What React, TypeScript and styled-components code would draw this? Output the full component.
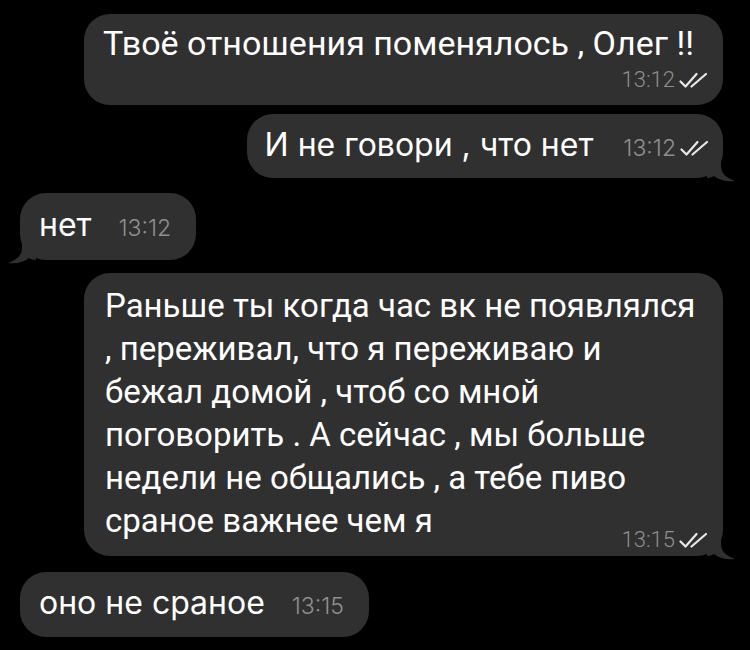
import React from "react";
import styled, { createGlobalStyle } from "styled-components";

type Face = "roboto" | "sf";

const fontStack = (face: Face) =>
  face === "roboto"
    ? `Roboto, "Noto Sans", sans-serif`
    : `Inter, "Open Sans", sans-serif`;

const GlobalStyle = createGlobalStyle`
  html, body {
    margin: 0;
    padding: 0;
    background: #000000;
  }
  #root {
    min-height: 650px;
    background: #000000;
  }
`;

export default function App() {
  return (
    <>
      <GlobalStyle />
      <Chat>
        <Row $out>
          <Bubble $pad="8px 15px 13px 19px" $width={639}>
            <Line $face="roboto" $size={34}>
              Твоё отношения поменялось , Олег !!
            </Line>
            <MetaRow>
              <Meta time="13:12" face="roboto" read />
            </MetaRow>
          </Bubble>
        </Row>

        <Row $out $gap={9}>
          <Bubble $pad="11px 14px 13px 18px">
            <InlineRow $gap={30}>
              <Line $face="sf" $size={32}>И не говори , что нет</Line>
              <Meta time="13:12" face="sf" read />
            </InlineRow>
            <Tail side="right" />
          </Bubble>
        </Row>

        <Row $gap={15}>
          <Bubble $pad="12px 25px 15px 19px">
            <InlineRow $gap={27}>
              <Line $face="sf" $size={32}>нет</Line>
              <Meta time="13:12" face="sf" />
            </InlineRow>
            <Tail side="left" />
          </Bubble>
        </Row>

        <Row $out $gap={13}>
          <Bubble $pad="11px 15px 14px 21px" $width={639}>
            <Line $face="roboto" $size={33}>Раньше ты когда час вк не появлялся</Line>
            <Line $face="roboto" $size={33}>, переживал, что я переживаю и</Line>
            <Line $face="roboto" $size={33}>бежал домой , чтоб со мной</Line>
            <Line $face="roboto" $size={33}>поговорить . А сейчас , мы больше</Line>
            <Line $face="roboto" $size={33}>недели не общались , а тебе пиво</Line>
            <LastRow>
              <Line $face="roboto" $size={33}>сраное важнее чем я</Line>
              <MetaSink>
                <Meta time="13:15" face="roboto" read />
              </MetaSink>
            </LastRow>
            <Tail side="right" />
          </Bubble>
        </Row>

        <Row $gap={16}>
          <Bubble $pad="11px 25px 14px 19px">
            <InlineRow $gap={27}>
              <Line $face="sf" $size={32}>оно не сраное</Line>
              <Meta time="13:15" face="sf" />
            </InlineRow>
          </Bubble>
        </Row>
      </Chat>
    </>
  );
}

interface MetaProps {
  time: string;
  face: Face;
  read?: boolean;
}
function Meta({ time, face, read }: MetaProps) {
  return (
    <MetaBox>
      <Time $face={face}>{time}</Time>
      {read && (
        <Checks width="29" height="17" viewBox="0 0 29 17">
          <polyline points="1.5,9.5 6.5,14.5 17.5,2" />
          <line x1="12.5" y1="14.5" x2="27" y2="2" />
        </Checks>
      )}
    </MetaBox>
  );
}

function Tail({ side }: { side: "left" | "right" }) {
  return (
    <TailSvg $side={side} width="30" height="26" viewBox="0 0 30 26">
      <path d="M14 0 L14 10 C14 18 20 22 28 25 C19 26 12 24 7 20 C5 21 3 22 0 22 L0 0 Z" />
    </TailSvg>
  );
}

const Chat = styled.div`
  display: flex;
  flex-direction: column;
  padding: 14px 27px 0 20px;
`;

const Row = styled.div<{ $out?: boolean; $gap?: number }>`
  display: flex;
  justify-content: ${(p) => (p.$out ? "flex-end" : "flex-start")};
  margin-top: ${(p) => p.$gap ?? 0}px;
`;

const Bubble = styled.div<{ $pad: string; $width?: number }>`
  position: relative;
  box-sizing: border-box;
  ${(p) => (p.$width ? `width: ${p.$width}px;` : "")}
  padding: ${(p) => p.$pad};
  background: #303030;
  border-radius: 26px;
  color: #ffffff;
`;

const Line = styled.div<{ $face: Face; $size: number }>`
  position: relative;
  z-index: 1;
  font-family: ${(p) => fontStack(p.$face)};
  font-size: ${(p) => p.$size}px;
  line-height: ${(p) => (p.$face === "roboto" ? 43 : 40)}px;
  white-space: nowrap;
`;

const InlineRow = styled.div<{ $gap: number }>`
  position: relative;
  z-index: 1;
  display: flex;
  align-items: baseline;
  gap: ${(p) => p.$gap}px;
`;

const LastRow = styled.div`
  position: relative;
  z-index: 1;
  display: flex;
  justify-content: space-between;
  align-items: flex-end;
`;

const MetaSink = styled.div`
  margin-bottom: -10px;
`;

const MetaRow = styled.div`
  display: flex;
  justify-content: flex-end;
  margin-top: 3px;
`;

const MetaBox = styled.div`
  display: flex;
  align-items: center;
  gap: 4px;
`;

const Time = styled.span<{ $face: Face }>`
  font-family: ${(p) => fontStack(p.$face)};
  font-size: ${(p) => (p.$face === "roboto" ? 22 : 23)}px;
  font-weight: 300;
  color: #8f8f8f;
  line-height: 24px;
`;

const Checks = styled.svg`
  fill: none;
  stroke: #e8e8e8;
  stroke-width: 2.2;
  stroke-linecap: round;
  stroke-linejoin: round;
`;

const TailSvg = styled.svg<{ $side: "left" | "right" }>`
  position: absolute;
  bottom: -4px;
  ${(p) => (p.$side === "right" ? "right: -14px;" : "left: -14px; transform: scaleX(-1);")}
  fill: #303030;
  z-index: 0;
`;
